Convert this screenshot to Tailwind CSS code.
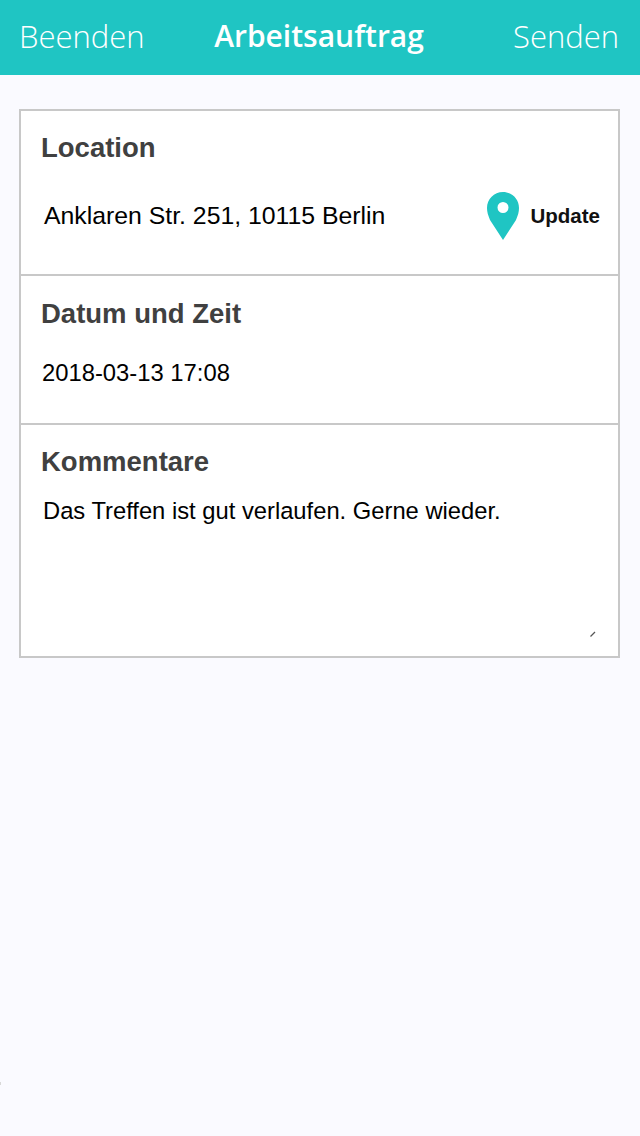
<!DOCTYPE html>
<html lang="de">
<head>
<meta charset="utf-8">
<title>Arbeitsauftrag</title>
<script src="https://cdn.jsdelivr.net/npm/@tailwindcss/browser@4"></script>
</head>
<body class="bg-[#fafaff]">
  <div class="relative w-[640px] h-[1136px] bg-[#fafaff] font-['Liberation_Sans',sans-serif]">
    <!-- Header -->
    <header class="h-[75px] bg-[#1fc5c3] text-white font-['Open_Sans',sans-serif] grid grid-cols-[1fr_auto_1fr] items-start pl-[19px] pr-[21px]">
      <span class="text-[31px] font-light leading-[72px]">Beenden</span>
      <span class="text-[30px] font-semibold leading-[72px]">Arbeitsauftrag</span>
      <span class="text-[31px] font-light leading-[72px] text-right">Senden</span>
    </header>

    <!-- Card -->
    <main class="mt-[34px] mx-[19px] w-[601px] h-[549px] bg-white border-2 border-[#c8c8c8] flex flex-col">
      <section class="h-[165px] border-b-2 border-[#c8c8c8] pl-5 pr-[18px] pt-[21px]">
        <h2 class="text-[27.500px] leading-[32px] font-bold text-[#404040]">Location</h2>
        <div class="mt-[28px] flex items-center justify-between">
          <p class="pl-[3px] text-[24.800px] leading-[30px] text-black">Anklaren Str. 251, 10115 Berlin</p>
          <div class="flex items-center gap-[12px]">
            <svg width="32" height="48" viewBox="0 0 32 48">
              <path fill="#1fc5c3" fill-rule="evenodd" d="M16 0C7 0 0 7 0 16c0 4 1 7 3 12l13 20 13-20c2-5 3-8 3-12C32 7 25 0 16 0zm0 10a5.500 5.500 0 1 1 0 11 5.500 5.500 0 0 1 0-11z"/>
            </svg>
            <span class="text-[20.500px] font-bold text-[#111]">Update</span>
          </div>
        </div>
      </section>

      <section class="h-[149px] border-b-2 border-[#c8c8c8] pl-5 pt-[22px]">
        <h2 class="text-[27.500px] leading-[32px] font-bold text-[#404040]">Datum und Zeit</h2>
        <p class="mt-[29px] pl-px text-[23.800px] leading-[28px] text-black">2018-03-13 17:08</p>
      </section>

      <section class="relative flex-1 pl-5 pt-[21px]">
        <h2 class="text-[27.500px] leading-[32px] font-bold text-[#404040]">Kommentare</h2>
        <p class="mt-[19px] pl-[2px] text-[23.750px] leading-[28px] text-black">Das Treffen ist gut verlaufen. Gerne wieder.</p>
        <!-- textarea resize grip -->
        <svg class="absolute right-[22px] bottom-[19px]" width="6" height="6" viewBox="0 0 6 6">
          <path d="M0.500 5.500 5 1" stroke="#555" stroke-width="1.200" fill="none"/>
        </svg>
      </section>
    </main>

    <!-- small mark on the left edge of the reference -->
    <div class="absolute left-0 top-[1082px] w-px h-[3px] bg-[#d8d8d8]"></div>
  </div>
</body>
</html>
